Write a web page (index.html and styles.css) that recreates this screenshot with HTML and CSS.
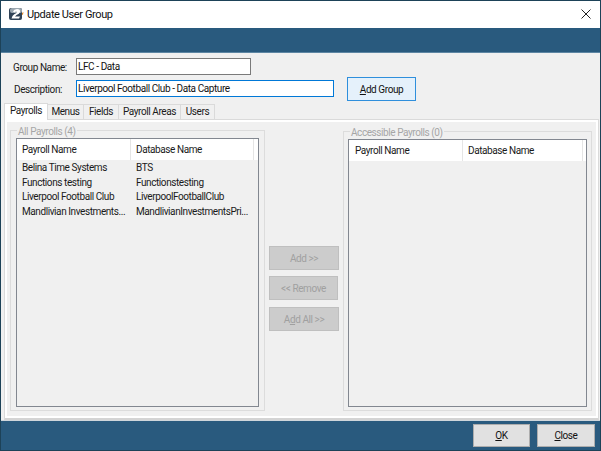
FILE: index.html
```html
<!DOCTYPE html>
<html lang="en">
<head>
<meta charset="utf-8">
<title>Update User Group</title>
<link rel="stylesheet" href="styles.css">
</head>
<body>
<div class="window">
  <header class="titlebar">
    <svg class="app-icon" width="15" height="14" viewBox="0 0 15 14">
      <rect x="0" y="1" width="13" height="12" rx="2" fill="#2f4256"/>
      <rect x="1" y="1" width="12" height="5" rx="2" fill="#9aa6af"/>
      <path d="M4 4.5 Q5 2 8 2 Q11.5 2 11 5 Q10.5 7 7.5 8 L6 9.5 H11 L10 11.5 H2.5 L3.5 9 Q5 7 7.5 6 Q8.5 5 7.5 4.5 Q6 4.3 5.5 5.5 Z" fill="#fff"/>
      <path d="M13 6 L14.5 5 L14 7.5 L13 8 Z" fill="#e08a2c"/>
    </svg>
    <span class="title">Update User Group</span>
    <svg class="close" width="10" height="10" viewBox="0 0 10 10"><path d="M0.5 0.5 L9.5 9.5 M9.5 0.5 L0.5 9.5" stroke="#222" stroke-width="1" fill="none"/></svg>
  </header>
  <div class="band"></div>
  <main class="content">
    <div class="form-top">
      <div class="fields">
        <div class="field field-name">
          <label class="label">Group Name:</label>
          <div class="input input-name">LFC - Data</div>
        </div>
        <div class="field field-desc">
          <label class="label label-desc">Description:</label>
          <div class="input input-desc">Liverpool Football Club - Data Capture</div>
        </div>
      </div>
      <button class="btn btn-add-group"><span class="ul">A</span>dd Group</button>
    </div>
    <nav class="tabs">
      <div class="tab tab-active">Payrolls</div>
      <div class="tab tab-menus">Menus</div>
      <div class="tab tab-fields">Fields</div>
      <div class="tab tab-areas">Payroll Areas</div>
      <div class="tab tab-users">Users</div>
    </nav>
    <section class="panel">
      <div class="group group-left">
        <span class="legend">All Payrolls (4)</span>
        <div class="list">
          <div class="row head"><span class="col1">Payroll Name</span><span class="col2">Database Name</span><span class="col3"></span></div>
          <div class="rows">
            <div class="row"><span class="col1">Belina Time Systems</span><span class="col2">BTS</span></div>
            <div class="row"><span class="col1">Functions testing</span><span class="col2">Functionstesting</span></div>
            <div class="row"><span class="col1">Liverpool Football Club</span><span class="col2">LiverpoolFootballClub</span></div>
            <div class="row"><span class="col1">Mandlivian Investments...</span><span class="col2">MandlivianInvestmentsPri...</span></div>
          </div>
        </div>
      </div>
      <div class="actions">
        <button class="btn-dis">Add &gt;&gt;</button>
        <button class="btn-dis btn-remove">&lt;&lt; Remove</button>
        <button class="btn-dis">A<span class="ul">d</span>d All &gt;&gt;</button>
      </div>
      <div class="group group-right">
        <span class="legend">Accessible Payrolls (0)</span>
        <div class="list">
          <div class="row head"><span class="col1">Payroll Name</span><span class="col2">Database Name</span><span class="col3"></span></div>
        </div>
      </div>
    </section>
  </main>
  <footer class="footer">
    <button class="btn btn-foot btn-ok"><span class="ul">O</span>K</button>
    <button class="btn btn-foot"><span class="ul">C</span>lose</button>
  </footer>
</div>
</body>
</html>
```

FILE: styles.css
```css
* { box-sizing: border-box; }
html, body { margin: 0; padding: 0; }
body {
  width: 601px; height: 451px; overflow: hidden;
  font-family: Roboto, "Liberation Sans", Arial, sans-serif;
  font-size: 10px; letter-spacing: -0.42px; color: #1a1a1a;
}
.window {
  width: 601px; height: 451px;
  display: flex; flex-direction: column;
  border: 1px solid #1d4258;
  background: #f0f0f0;
}
.titlebar {
  height: 27px; background: #fff;
  display: flex; align-items: center;
  padding: 0 9px 0 8px;
}
.app-icon { margin-right: 3px; margin-top: -1px; }
.title { font-size: 11px; letter-spacing: -0.4px; color: #111; flex: 1; margin-top: -1px; }
.close { margin-top: -2px; }
.band {
  height: 25px; background: #295a7e;
  border-bottom: 1px solid #5d86a3;
}
.content { flex: 1; display: flex; flex-direction: column; padding: 0 2px 0 3px; min-height: 0; }
.form-top { display: flex; height: 50px; padding-left: 9px; }
.fields { width: 321px; flex: none; }
.field { display: flex; align-items: center; }
.field-name { margin-top: 5px; }
.field-desc { margin-top: 5px; }
.label { width: 63px; flex: none; padding-top: 1px; }
.label-desc { padding-left: 1px; }
.input {
  height: 17px; background: #fff; border: 1px solid #7a7a7a;
  padding-left: 1px; line-height: 15px; color: #111; flex: none;
}
.input-name { width: 175px; }
.input-desc { width: 258px; border-color: #0078d7; }
.btn {
  font: inherit; letter-spacing: inherit; color: #111; padding: 0;
  background: #e1e1e1; border: 1px solid #adadad;
}
.btn-add-group {
  width: 69px; height: 24px; margin: 24px 0 0 13px;
  background: #e5f1fb; border-color: #2f8fdc;
}
.ul { text-decoration: underline; }
.tabs { display: flex; height: 16px; align-items: flex-end; position: relative; z-index: 1; }
.tab {
  height: 15px; background: #f0f0f0;
  border: 1px solid #dadada; border-bottom: 0; border-left: 0;
  line-height: 14px; text-align: center; white-space: nowrap;
}
.tab-active {
  height: 17px; width: 44px; background: #fff;
  border-left: 1px solid #dadada; margin-bottom: -1px; line-height: 13px;
}
.tab-menus { width: 36px; }
.tab-fields { width: 35px; }
.tab-areas { width: 62px; }
.tab-users { width: 34px; }
.panel {
  flex: 1; display: flex; min-height: 0;
  border: 1px solid #dadada; border-bottom: 2px solid #d4d4d4;
  padding: 5px 5px 7px 5px;
  box-shadow: inset 0 0 0 2px #fff;
  margin-right: -1px;
}
.group {
  position: relative;
  border: 1px solid #dcdcdc; margin-top: 5px;
  padding: 7px 5px 3px 5px;
  flex: none;
}
.group-left { width: 255px; }
.group-right { width: 249px; margin-top: 6px; padding: 7px 4px 3px 4px; }
.legend {
  position: absolute; top: -5px; left: 6px; padding: 0 1px;
  background: #f0f0f0; color: #a6a6a6; line-height: 12px;
}
.list {
  height: 100%; display: flex; flex-direction: column;
  border: 1px solid #828790;
  background: #f0f0f0;
}
.row { display: flex; }
.head { height: 21px; background: #fff; align-items: center; }
.col1 { width: 113px; padding-left: 5px; flex: none; white-space: nowrap; }
.col2 { width: 123px; padding-left: 5px; flex: none; white-space: nowrap; }
.rows .col2 { padding-left: 6px; }
.head .col2 { border-left: 1px solid #e5e5e5; height: 100%; line-height: 21px; }
.head .col3 { width: 5px; flex: none; height: 100%; border-left: 1px solid #e5e5e5; }
.group-right .col1 { padding-left: 6px; }
.group-right .col2 { width: 120px; }
.rows { padding-top: 1px; }
.rows .row { height: 14.5px; line-height: 14px; }
.actions {
  width: 78px; flex: none; display: flex; flex-direction: column;
  padding: 121px 0 0 4px; gap: 7px; align-items: flex-start;
}
.btn-dis {
  font: inherit; letter-spacing: inherit; width: 70px; height: 24px; padding: 0;
  background: #cccccc; border: 1px solid #bfbfbf; color: #a0a0a0;
}
.btn-remove { width: 69px; margin-top: -1px; }
.footer {
  height: 30px; background: #295a7e;
  border-top: 1px solid #cfd6db;
  display: flex; justify-content: flex-end; align-items: flex-start;
  padding: 3px 5px 0 0; gap: 7px;
}
.btn-foot { width: 58px; height: 23px; }
.btn-ok { width: 57px; }
```
